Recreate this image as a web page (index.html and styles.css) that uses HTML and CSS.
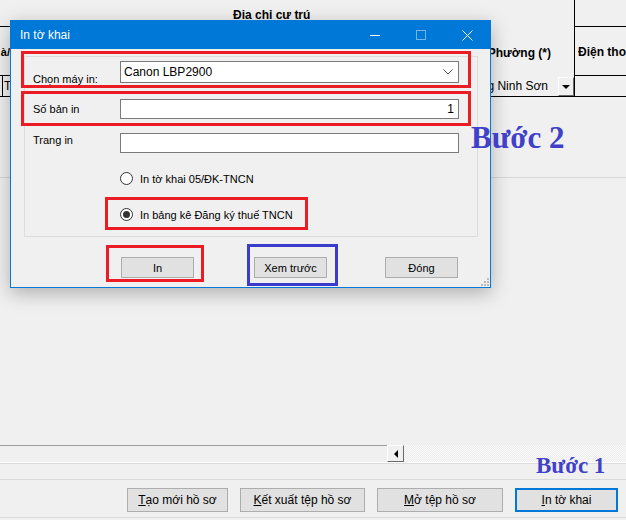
FILE: index.html
```html
<!DOCTYPE html>
<html>

<head>
    <meta charset="UTF-8">
    <meta name="viewport" content="width=device-width, initial-scale=1.0">
    <title>In tờ khai</title>
    <link rel="stylesheet" href="styles.css">
</head>

<body>
    <div class="app">
        <div class="sheet">
            <div class="grid">
                <div class="cell c-left r1"></div>
                <div class="cell c-mid r1 head-title">Địa chỉ cư trú</div>
                <div class="cell c-right r1"></div>

                <div class="cell c-left r2 bold end">à/</div>
                <div class="cell c-mid r2 bold end pad-ward">Xã/Phường (*)</div>
                <div class="cell c-right r2 bold">Điện thoại</div>

                <div class="cell c-left r3"><span class="cut">T</span></div>
                <div class="cell c-mid r3 end">
                    <span>Phường Ninh Sơn</span>
                    <span class="drop-btn"><i></i></span>
                </div>
                <div class="cell c-right r3"></div>
            </div>
            <div class="sheet-line"></div>
        </div>

        <div class="hscroll">
            <div class="hs-left"></div>
            <div class="hs-btn"><i></i></div>
            <div class="hs-track"></div>
        </div>
        <div class="sep"></div>

        <div class="footer">
            <button class="fbtn w-new"><u>T</u>ạo mới hồ sơ</button>
            <button class="fbtn w-export"><u>K</u>ết xuất tệp hồ sơ</button>
            <button class="fbtn w-open"><u>M</u>ở tệp hồ sơ</button>
            <button class="fbtn w-print focused"><u>I</u>n tờ khai</button>
        </div>

        <div class="dialog">
            <div class="titlebar">
                <span class="title">In tờ khai</span>
                <span class="tb-btn"><i class="ico-min"></i></span>
                <span class="tb-btn"><i class="ico-max"></i></span>
                <span class="tb-btn">
                    <svg width="11" height="11" viewBox="0 0 11 11"><path d="M0.5 0.5L10.5 10.5M10.5 0.5L0.5 10.5" stroke="#fff" stroke-width="1" fill="none"/></svg>
                </span>
            </div>

            <div class="dlg-body">
                <div class="group">
                    <div class="row row-printer">
                        <label class="lbl lbl-low">Chọn máy in:</label>
                        <div class="combo">
                            <span>Canon LBP2900</span>
                            <svg width="10" height="6" viewBox="0 0 10 6"><path d="M0.5 0.5L5 5L9.5 0.5" stroke="#555" fill="none"/></svg>
                        </div>
                    </div>
                    <div class="row row-copies">
                        <label class="lbl">Số bản in</label>
                        <div class="textbox num">1</div>
                    </div>
                    <div class="row row-pages">
                        <label class="lbl">Trang in</label>
                        <div class="textbox"></div>
                    </div>
                    <div class="radio-row r-first">
                        <span class="radio"></span>
                        <span>In tờ khai 05/ĐK-TNCN</span>
                    </div>
                    <div class="radio-row r-second">
                        <span class="radio checked"></span>
                        <span>In bảng kê Đăng ký thuế TNCN</span>
                    </div>
                </div>

                <div class="dlg-buttons">
                    <button class="dbtn">In</button>
                    <button class="dbtn btn-preview">Xem trước</button>
                    <button class="dbtn btn-close">Đóng</button>
                </div>
            </div>

            <svg class="grip" width="8" height="8" viewBox="0 0 8 8">
                <rect x="6" y="0" width="2" height="2" fill="#bcbcbc"/>
                <rect x="3" y="3" width="2" height="2" fill="#bcbcbc"/>
                <rect x="6" y="3" width="2" height="2" fill="#bcbcbc"/>
                <rect x="0" y="6" width="2" height="2" fill="#bcbcbc"/>
                <rect x="3" y="6" width="2" height="2" fill="#bcbcbc"/>
                <rect x="6" y="6" width="2" height="2" fill="#bcbcbc"/>
            </svg>

            <!-- annotation frames -->
            <div class="mark red m-printer"></div>
            <div class="mark red m-copies"></div>
            <div class="mark red m-radio"></div>
            <div class="mark red m-print"></div>
            <div class="mark blue m-preview"></div>
        </div>

        <div class="step step-1">Bước 1</div>
        <div class="step step-2">Bước 2</div>
    </div>
</body>

</html>
```

FILE: styles.css
```css
body {
    margin: 0;
    background: #f0f0f0;
    font-family: "Liberation Sans", Arial, sans-serif;
    font-size: 12px;
    color: #000;
}
.app {
    position: relative;
    width: 626px;
    height: 520px;
    overflow: hidden;
}

/* background grid */
.sheet {
    height: 445px;
}
.grid {
    display: grid;
    grid-template-columns: 10px 565px 51px;
    grid-template-rows: 27px 49px 21px;
}
.cell {
    display: flex;
    align-items: center;
    white-space: nowrap;
    overflow: hidden;
    box-sizing: border-box;
}
.c-left,
.c-right {
    border-bottom: 1px solid #000;
}
.c-mid {
    border-right: 1px solid #000;
}
.c-mid.r3 {
    border-bottom: 1px solid #000;
}
.c-right {
    padding-left: 3px;
}
.bold {
    font-weight: bold;
}
.end {
    justify-content: flex-end;
}
.head-title {
    font-weight: bold;
    padding-left: 223px;
    padding-top: 2px;
}
.pad-ward {
    padding-right: 23px;
    padding-top: 2px;
}
.c-right.r2 {
    padding-top: 2px;
}
.c-left.r2 {
    padding-top: 2px;
    font-size: 11px;
}
.cut {
    border-left: 1px solid #000;
    margin-left: 2px;
    padding-left: 1px;
    height: 20px;
    line-height: 20px;
}
.drop-btn {
    width: 16px;
    height: 19px;
    margin-left: 10px;
    box-sizing: border-box;
    background: #f0f0f0;
    border-top: 1px solid #fff;
    border-left: 1px solid #fff;
    border-right: 1px solid #696969;
    border-bottom: 1px solid #696969;
    display: flex;
    align-items: center;
    justify-content: center;
}
.drop-btn i {
    width: 0;
    height: 0;
    border-left: 4px solid transparent;
    border-right: 4px solid transparent;
    border-top: 4px solid #000;
    margin-top: 2px;
}
.sheet-line {
    margin-top: 80px;
    border-top: 1px solid #d7d7d7;
}

/* horizontal scroll */
.hscroll {
    display: flex;
    height: 17px;
}
.hs-left {
    width: 387px;
    border-top: 1px solid #a0a0a0;
}
.hs-btn {
    width: 17px;
    box-sizing: border-box;
    background: #f0f0f0;
    border-top: 1px solid #fff;
    border-left: 1px solid #fff;
    border-right: 1px solid #696969;
    border-bottom: 1px solid #696969;
    display: flex;
    align-items: center;
    justify-content: center;
}
.hs-btn i {
    width: 0;
    height: 0;
    border-top: 4px solid transparent;
    border-bottom: 4px solid transparent;
    border-right: 4px solid #000;
}
.hs-track {
    flex: 1;
    background-color: #f4f4f4;
    background-image: repeating-conic-gradient(#fbfbfb 0 25%, #ececec 0 50%);
    background-size: 2px 2px;
}
.sep {
    height: 18px;
    box-sizing: border-box;
    border-top: 1px solid #fff;
    border-bottom: 1px solid #dadada;
    box-shadow: inset 0 1px 0 #dcdcdc;
}

/* footer */
.footer {
    height: 38px;
    box-sizing: border-box;
    padding-top: 8px;
    padding-right: 8px;
    display: flex;
    justify-content: flex-end;
    gap: 12px;
    border-bottom: 1px solid #dadada;
}
.fbtn {
    height: 24px;
    font-family: "Liberation Sans", Arial, sans-serif;
    font-size: 12px;
    background: #e1e1e1;
    border: 1px solid #adadad;
    padding: 0;
    color: #000;
}
.w-new {
    width: 101px;
}
.w-export {
    width: 125px;
}
.w-open {
    width: 126px;
}
.w-print {
    width: 103px;
}
.focused {
    border: 2px solid #0078d7;
}

/* dialog */
.dialog {
    position: absolute;
    left: 10px;
    top: 20px;
    width: 479px;
    height: 266px;
    border: 1px solid #0078d7;
    background: #f0f0f0;
    box-shadow: 0 5px 18px rgba(0,0,0,0.28);
    font-size: 11px;
}
.titlebar {
    height: 28px;
    background: #0078d7;
    color: #fff;
    display: flex;
    align-items: center;
}
.title {
    flex: 1;
    padding-left: 9px;
    font-size: 12px;
    padding-bottom: 1px;
}
.tb-btn {
    width: 46px;
    height: 28px;
    display: flex;
    align-items: center;
    justify-content: center;
}
.ico-min {
    width: 10px;
    border-top: 1px solid #fff;
}
.ico-max {
    width: 8px;
    height: 8px;
    border: 1px solid rgba(255,255,255,0.45);
}
.dlg-body {
    padding: 7px 11px 0 13px;
}
.group {
    width: 454px;
    height: 181px;
    box-sizing: border-box;
    border: 1px solid #dcdcdc;
    padding-left: 8px;
}
.row {
    display: flex;
    align-items: center;
}
.row-printer {
    margin-top: 4px;
    height: 22px;
}
.row-copies {
    margin-top: 16px;
    height: 20px;
}
.row-pages {
    margin-top: 14px;
    height: 20px;
    align-items: flex-start;
}
.lbl {
    width: 87px;
    line-height: 14px;
}
.lbl-low {
    align-self: flex-end;
    margin-bottom: -3px;
}
.combo,
.textbox {
    width: 339px;
    box-sizing: border-box;
    background: #fff;
    border: 1px solid #7a7a7a;
}
.combo {
    height: 22px;
    display: flex;
    align-items: center;
    justify-content: space-between;
    padding: 0 5px 0 3px;
    font-size: 12px;
}
.textbox {
    height: 20px;
    line-height: 18px;
    padding: 0 4px;
    font-size: 12px;
}
.num {
    text-align: right;
}
.radio-row {
    display: flex;
    align-items: center;
    height: 13px;
    padding-left: 87px;
    gap: 7px;
}
.r-first {
    margin-top: 19px;
}
.r-second {
    margin-top: 23px;
}
.radio {
    width: 13px;
    height: 13px;
    box-sizing: border-box;
    border: 1px solid #333;
    border-radius: 50%;
    background: #fff;
    display: flex;
    align-items: center;
    justify-content: center;
}
.radio.checked::after {
    content: "";
    width: 7px;
    height: 7px;
    border-radius: 50%;
    background: #333;
}
.dlg-buttons {
    display: flex;
    margin-top: 20px;
    padding-left: 97px;
    gap: 60px;
}
.dbtn {
    width: 73px;
    height: 21px;
    font-family: "Liberation Sans", Arial, sans-serif;
    font-size: 11px;
    background: #e1e1e1;
    border: 1px solid #adadad;
    padding: 0;
    color: #000;
}
.btn-close {
    margin-left: -2px;
}
.grip {
    position: absolute;
    left: 470px;
    top: 257px;
}

/* annotations */
.mark {
    position: absolute;
    box-sizing: border-box;
    border: 3px solid #ec1c24;
}
.mark.blue {
    border-color: #3b3bcc;
}
.m-printer {
    left: 10px;
    top: 30px;
    width: 450px;
    height: 37px;
}
.m-copies {
    left: 10px;
    top: 70px;
    width: 450px;
    height: 35px;
}
.m-radio {
    left: 94px;
    top: 176px;
    width: 203px;
    height: 33px;
}
.m-print {
    left: 95px;
    top: 224px;
    width: 98px;
    height: 37px;
}
.m-preview {
    left: 236px;
    top: 223px;
    width: 91px;
    height: 42px;
}
.step {
    position: absolute;
    font-family: "Liberation Serif", "Times New Roman", serif;
    font-weight: bold;
    color: #4040c8;
    line-height: 1;
}
.step-1 {
    left: 536px;
    top: 454px;
    font-size: 23px;
}
.step-2 {
    left: 471px;
    top: 122px;
    font-size: 31px;
}
```
